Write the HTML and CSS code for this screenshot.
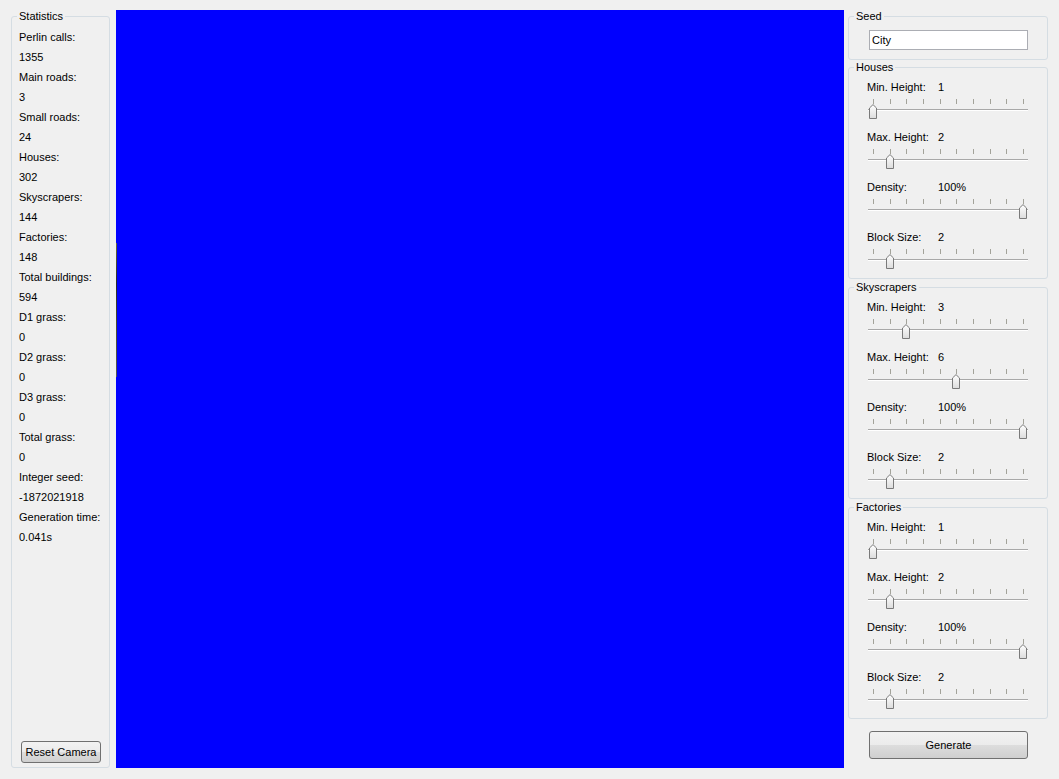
FILE: index.html
```html
<!DOCTYPE html>
<html>
<head>
<meta charset="utf-8">
<link rel="stylesheet" href="styles.css">
</head>
<body>
<div class="app">
  <fieldset class="group stats">
    <legend>Statistics</legend>
    <div class="stats-list">
      <div class="line">Perlin calls:</div><div class="line">1355</div>
      <div class="line">Main roads:</div><div class="line">3</div>
      <div class="line">Small roads:</div><div class="line">24</div>
      <div class="line">Houses:</div><div class="line">302</div>
      <div class="line">Skyscrapers:</div><div class="line">144</div>
      <div class="line">Factories:</div><div class="line">148</div>
      <div class="line">Total buildings:</div><div class="line">594</div>
      <div class="line">D1 grass:</div><div class="line">0</div>
      <div class="line">D2 grass:</div><div class="line">0</div>
      <div class="line">D3 grass:</div><div class="line">0</div>
      <div class="line">Total grass:</div><div class="line">0</div>
      <div class="line">Integer seed:</div><div class="line">-1872021918</div>
      <div class="line">Generation time:</div><div class="line">0.041s</div>
    </div>
    <button class="btn reset">Reset Camera</button>
  </fieldset>

  <div class="canvas"><div class="artifact"></div></div>

  <div class="side">
    <fieldset class="group seed">
      <legend>Seed</legend>
      <input class="seed-input" type="text" value="City">
    </fieldset>

    <fieldset class="group params first">
      <legend>Houses</legend>
      <div class="row"><div class="label"><span class="lbl">Min. Height:</span><span>1</span></div>
        <div class="slider"><div class="ticks"><i></i><i></i><i></i><i></i><i></i><i></i><i></i><i></i><i></i><i></i></div><div class="groove"></div>
          <svg class="handle" style="left:1px" width="8" height="15" viewBox="0 0 8 15"><defs><linearGradient id="hg" x1="0" y1="0" x2="0" y2="1"><stop offset="0" stop-color="#ffffff"/><stop offset="1" stop-color="#dcdcdc"/></linearGradient></defs><path d="M0.5 14.5V4L4 0.6L7.5 4V14.5Z" fill="url(#hg)" stroke="#7a7a7a"/></svg></div></div>
      <div class="row"><div class="label"><span class="lbl">Max. Height:</span><span>2</span></div>
        <div class="slider"><div class="ticks"><i></i><i></i><i></i><i></i><i></i><i></i><i></i><i></i><i></i><i></i></div><div class="groove"></div>
          <svg class="handle" style="left:17.7px" width="8" height="15" viewBox="0 0 8 15"><path d="M0.5 14.5V4L4 0.6L7.5 4V14.5Z" fill="url(#hg)" stroke="#7a7a7a"/></svg></div></div>
      <div class="row"><div class="label"><span class="lbl">Density:</span><span>100%</span></div>
        <div class="slider"><div class="ticks"><i></i><i></i><i></i><i></i><i></i><i></i><i></i><i></i><i></i><i></i></div><div class="groove"></div>
          <svg class="handle" style="left:151px" width="8" height="15" viewBox="0 0 8 15"><path d="M0.5 14.5V4L4 0.6L7.5 4V14.5Z" fill="url(#hg)" stroke="#7a7a7a"/></svg></div></div>
      <div class="row"><div class="label"><span class="lbl">Block Size:</span><span>2</span></div>
        <div class="slider"><div class="ticks"><i></i><i></i><i></i><i></i><i></i><i></i><i></i><i></i><i></i><i></i></div><div class="groove"></div>
          <svg class="handle" style="left:17.7px" width="8" height="15" viewBox="0 0 8 15"><path d="M0.5 14.5V4L4 0.6L7.5 4V14.5Z" fill="url(#hg)" stroke="#7a7a7a"/></svg></div></div>
    </fieldset>

    <fieldset class="group params">
      <legend>Skyscrapers</legend>
      <div class="row"><div class="label"><span class="lbl">Min. Height:</span><span>3</span></div>
        <div class="slider"><div class="ticks"><i></i><i></i><i></i><i></i><i></i><i></i><i></i><i></i><i></i><i></i></div><div class="groove"></div>
          <svg class="handle" style="left:34.3px" width="8" height="15" viewBox="0 0 8 15"><path d="M0.5 14.5V4L4 0.6L7.5 4V14.5Z" fill="url(#hg)" stroke="#7a7a7a"/></svg></div></div>
      <div class="row"><div class="label"><span class="lbl">Max. Height:</span><span>6</span></div>
        <div class="slider"><div class="ticks"><i></i><i></i><i></i><i></i><i></i><i></i><i></i><i></i><i></i><i></i></div><div class="groove"></div>
          <svg class="handle" style="left:84.3px" width="8" height="15" viewBox="0 0 8 15"><path d="M0.5 14.5V4L4 0.6L7.5 4V14.5Z" fill="url(#hg)" stroke="#7a7a7a"/></svg></div></div>
      <div class="row"><div class="label"><span class="lbl">Density:</span><span>100%</span></div>
        <div class="slider"><div class="ticks"><i></i><i></i><i></i><i></i><i></i><i></i><i></i><i></i><i></i><i></i></div><div class="groove"></div>
          <svg class="handle" style="left:151px" width="8" height="15" viewBox="0 0 8 15"><path d="M0.5 14.5V4L4 0.6L7.5 4V14.5Z" fill="url(#hg)" stroke="#7a7a7a"/></svg></div></div>
      <div class="row"><div class="label"><span class="lbl">Block Size:</span><span>2</span></div>
        <div class="slider"><div class="ticks"><i></i><i></i><i></i><i></i><i></i><i></i><i></i><i></i><i></i><i></i></div><div class="groove"></div>
          <svg class="handle" style="left:17.7px" width="8" height="15" viewBox="0 0 8 15"><path d="M0.5 14.5V4L4 0.6L7.5 4V14.5Z" fill="url(#hg)" stroke="#7a7a7a"/></svg></div></div>
    </fieldset>

    <fieldset class="group params">
      <legend>Factories</legend>
      <div class="row"><div class="label"><span class="lbl">Min. Height:</span><span>1</span></div>
        <div class="slider"><div class="ticks"><i></i><i></i><i></i><i></i><i></i><i></i><i></i><i></i><i></i><i></i></div><div class="groove"></div>
          <svg class="handle" style="left:1px" width="8" height="15" viewBox="0 0 8 15"><path d="M0.5 14.5V4L4 0.6L7.5 4V14.5Z" fill="url(#hg)" stroke="#7a7a7a"/></svg></div></div>
      <div class="row"><div class="label"><span class="lbl">Max. Height:</span><span>2</span></div>
        <div class="slider"><div class="ticks"><i></i><i></i><i></i><i></i><i></i><i></i><i></i><i></i><i></i><i></i></div><div class="groove"></div>
          <svg class="handle" style="left:17.7px" width="8" height="15" viewBox="0 0 8 15"><path d="M0.5 14.5V4L4 0.6L7.5 4V14.5Z" fill="url(#hg)" stroke="#7a7a7a"/></svg></div></div>
      <div class="row"><div class="label"><span class="lbl">Density:</span><span>100%</span></div>
        <div class="slider"><div class="ticks"><i></i><i></i><i></i><i></i><i></i><i></i><i></i><i></i><i></i><i></i></div><div class="groove"></div>
          <svg class="handle" style="left:151px" width="8" height="15" viewBox="0 0 8 15"><path d="M0.5 14.5V4L4 0.6L7.5 4V14.5Z" fill="url(#hg)" stroke="#7a7a7a"/></svg></div></div>
      <div class="row"><div class="label"><span class="lbl">Block Size:</span><span>2</span></div>
        <div class="slider"><div class="ticks"><i></i><i></i><i></i><i></i><i></i><i></i><i></i><i></i><i></i><i></i></div><div class="groove"></div>
          <svg class="handle" style="left:17.7px" width="8" height="15" viewBox="0 0 8 15"><path d="M0.5 14.5V4L4 0.6L7.5 4V14.5Z" fill="url(#hg)" stroke="#7a7a7a"/></svg></div></div>
    </fieldset>

    <button class="btn generate">Generate</button>
  </div>
</div>
</body>
</html>
```

FILE: styles.css
```css
* { box-sizing: border-box; }
html, body {
  margin: 0;
  padding: 0;
  background: #f0f0f0;
  font-family: "Liberation Sans", Arial, sans-serif;
  font-size: 11px;
  color: #000;
}
.app {
  display: flex;
  align-items: stretch;
  height: 779px;
  padding: 10px 11px 11px 11px;
}
.group {
  margin: 0;
  border: 1px solid #d5dde3;
  border-radius: 3px;
  padding: 0;
  min-width: 0;
}
.group legend {
  padding: 0 2px;
  margin-left: 5px;
  line-height: 13px;
  height: 13px;
}
.stats {
  width: 99px;
  display: flex;
  flex-direction: column;
  padding: 4px 0 4px 0;
}
.stats-list {
  flex: 1;
  padding-left: 7px;
}
.line {
  line-height: 20px;
  height: 20px;
  white-space: nowrap;
}
.btn {
  font-family: "Liberation Sans", Arial, sans-serif;
  font-size: 11px;
  color: #000;
  border: 1px solid #707070;
  border-radius: 3px;
  background: linear-gradient(#f2f2f2 0%, #ebebeb 50%, #dddddd 50%, #cfcfcf 100%);
  padding: 0;
}
.reset {
  width: 80px;
  height: 22px;
  margin-left: 9px;
}
.canvas {
  width: 728px;
  margin-left: 6px;
  background: #0000ff;
  position: relative;
}
.artifact {
  position: absolute;
  left: 0;
  top: 233px;
  width: 1px;
  height: 134px;
  background: linear-gradient(#6b6b3a, #2a2a2a 30%, #4a4a30 60%, #555 100%);
}
.side {
  width: 200px;
  margin-left: 4px;
  display: flex;
  flex-direction: column;
}
.seed {
  padding: 7px 0 9px 0;
}
.seed-input {
  display: block;
  width: 159px;
  height: 20px;
  border: 1px solid #abadb3;
  background: #fff;
  font-family: "Liberation Sans", Arial, sans-serif;
  font-size: 11px;
  padding: 0 0 0 2px;
  margin: 0 0 0 20px;
  outline: none;
}
.params {
  margin-top: 2px;
  padding: 7px 0 9px 0;
  display: flex;
  flex-direction: column;
  gap: 12px;
}
.params.first {
  margin-top: 1px;
}
.row {
  margin-left: 18px;
}
.label {
  display: flex;
  line-height: 13px;
  height: 13px;
  white-space: nowrap;
}
.lbl {
  width: 71px;
}
.slider {
  position: relative;
  width: 160px;
  height: 25px;
  margin-left: 1px;
  padding-top: 5px;
}
.ticks {
  display: flex;
  justify-content: space-between;
  height: 5px;
  padding: 0 4px 0 5px;
}
.ticks i {
  display: block;
  width: 1px;
  height: 5px;
  background: #a3a39a;
}
.groove {
  margin-top: 5px;
  height: 0;
  border-top: 1px solid #a8a8a8;
  border-bottom: 1px solid #ffffff;
}
.handle {
  position: absolute;
  top: 10px;
  display: block;
}
.generate {
  width: 159px;
  height: 28px;
  margin-top: 12px;
  margin-left: 21px;
}
```
